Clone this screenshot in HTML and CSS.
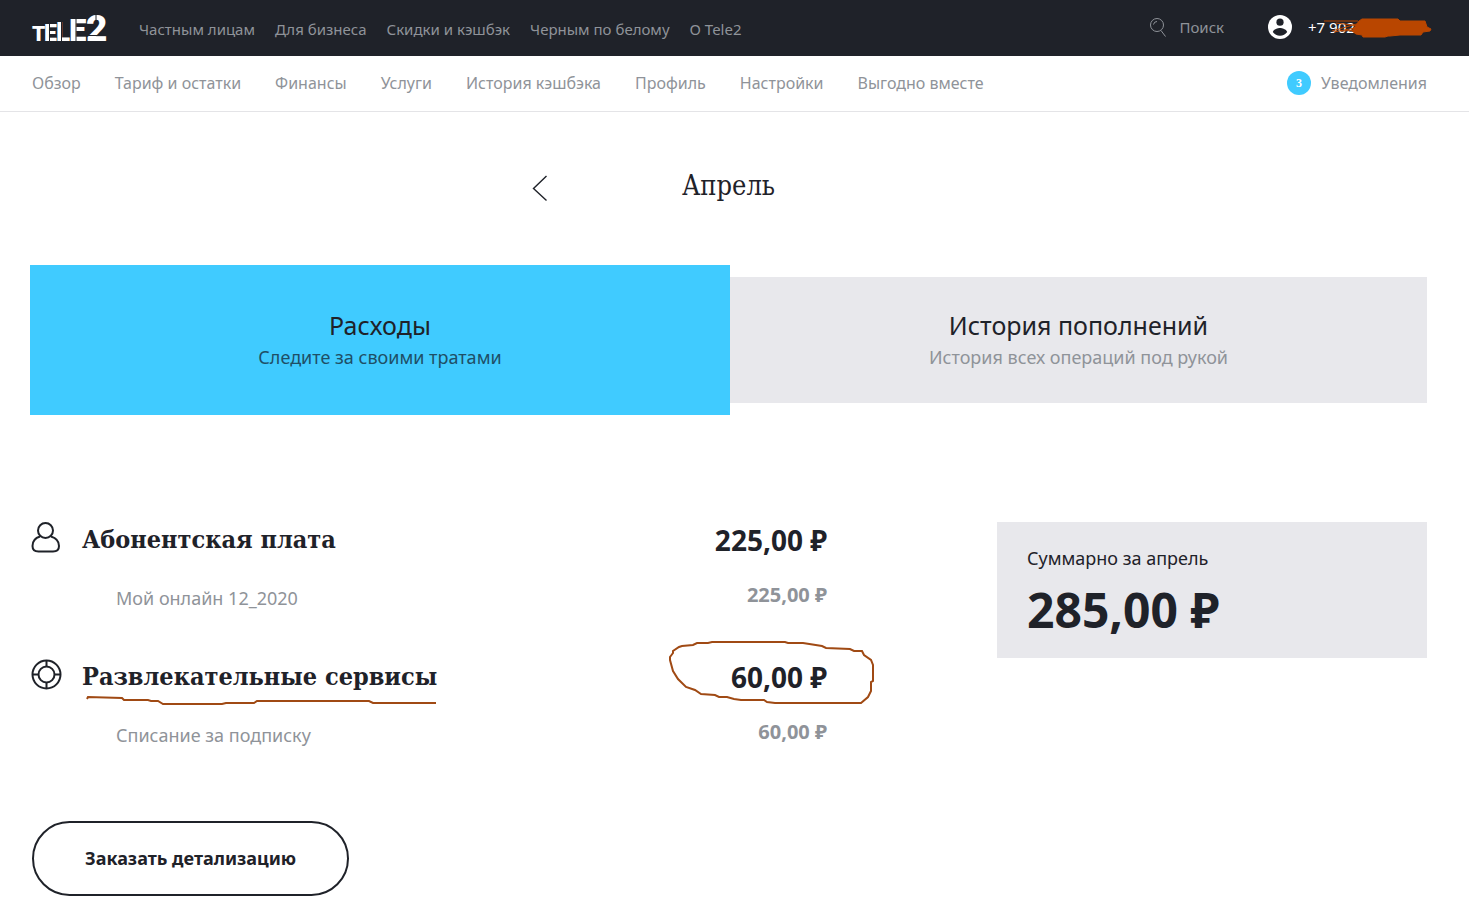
FILE: index.html
```html
<!DOCTYPE html>
<html lang="ru">
<head>
<meta charset="utf-8">
<meta name="viewport" content="width=device-width, initial-scale=1">
<title>Tele2 — Расходы</title>
<link rel="stylesheet" href="styles.css">
</head>
<body>
<header class="topbar">
  <a class="logo" href="#" aria-label="Tele2">
    <svg width="74" height="30" viewBox="0 0 74 30">
      <g class="logo-text">
        <text x="0" y="28" font-size="21">T</text>
        <text x="12" y="28" font-size="23">E</text>
        <text x="24" y="28" font-size="26">L</text>
        <text x="37" y="28" font-size="31">E</text>
        <text x="54" y="28" font-size="37">2</text>
      </g>
      <path class="logo-cut" d="M17.500 8v21M29.500 6v23M44 4v25M64 0v8M54 22.500h20"/>
    </svg>
  </a>
  <nav class="site-nav" aria-label="Сайт">
    <a href="#">Частным лицам</a>
    <a href="#">Для бизнеса</a>
    <a href="#">Скидки и кэшбэк</a>
    <a href="#">Черным по белому</a>
    <a href="#">О Tele2</a>
  </nav>
  <div class="tools">
    <button class="search" type="button">
      <svg width="18" height="20" viewBox="0 0 18 20"><circle cx="8" cy="8" r="6.500"/><path d="M12 13.500l4.500 6M4.500 7.500q.5-3 3.500-3"/></svg>
      Поиск
    </button>
    <a class="account" href="#">
      <svg width="24" height="24" viewBox="0 0 24 24"><circle cx="12" cy="12" r="12" fill="#fff"/><circle cx="12" cy="7.200" r="3.600" fill="#1f2229"/><path d="M4.800 17c1-3 5-4 7.200-4s6.200 1 7.200 4a8.700 8.700 0 0 1-14.400 0z" fill="#1f2229"/></svg>
      <span class="phone">+7 902
        <svg class="scribble" width="110" height="20" viewBox="0 0 110 20"><path class="scribble-block" d="M37 2l3-2 36 0 2 2 25 0 2 6 4 2-1 2-7 1-2 3-21 0-10 1-2 0-3 1-22 0-1-2-6-1-4-3z"/><path class="scribble-lines" d="M2 2h34M14 4l24 3M10 12l28-8M12 13l26-5M20 12l18-1"/></svg>
      </span>
    </a>
  </div>
</header>
<nav class="subnav" aria-label="Личный кабинет">
  <a href="#">Обзор</a>
  <a href="#">Тариф и остатки</a>
  <a href="#">Финансы</a>
  <a href="#">Услуги</a>
  <a href="#">История кэшбэка</a>
  <a href="#">Профиль</a>
  <a href="#">Настройки</a>
  <a href="#">Выгодно вместе</a>
  <a class="notices" href="#"><span class="badge">3</span>Уведомления</a>
</nav>
<main class="page">
  <div class="month">
    <button class="prev" type="button" aria-label="Предыдущий месяц"><svg width="16" height="26" viewBox="0 0 16 26"><path d="M14.500 1L1.500 13.500l13 12"/></svg></button>
    <h1 class="month-name">Апрель</h1>
  </div>
  <div class="tabs">
    <button class="tab tab-active" type="button"><span class="tab-title">Расходы</span><span class="tab-note">Следите за своими тратами</span></button>
    <button class="tab" type="button"><span class="tab-title">История пополнений</span><span class="tab-note">История всех операций под рукой</span></button>
  </div>
  <div class="content">
    <div class="expenses">
      <section class="group">
        <div class="row row-main">
          <svg class="icon" width="32" height="32" viewBox="0 0 32 32"><circle cx="15.500" cy="8.500" r="7.500"/><path d="M10 14.500C5 16 2.500 19.500 2.500 24c0 4 2 5.500 6 5.500h14.500c4 0 6-1.500 6-5.500 0-4.500-3-8-8-9.500"/></svg>
          <h2 class="name">Абонентская плата</h2>
          <span class="amount">225,00 ₽</span>
        </div>
        <div class="row row-sub"><span>Мой онлайн 12_2020</span><span class="amount-sub">225,00 ₽</span></div>
      </section>
      <section class="group">
        <div class="row row-main">
          <svg class="icon" width="32" height="32" viewBox="0 0 32 32"><circle cx="16.500" cy="15.500" r="14"/><circle cx="16.500" cy="15.500" r="8"/><path d="M16.500 1.500v6M16.500 23.500v6M2.500 15.500h6M24.500 15.500h6"/></svg>
          <h2 class="name">Развлекательные сервисы
            <svg class="mark underline" width="354" height="10" viewBox="0 0 354 10"><path d="M1 4l1-2 34 1 2 2 24 0 3 1 7 0 5 3h59l4-1h28l3-2h112l4 2h63"/></svg>
          </h2>
          <span class="amount">60,00 ₽
            <svg class="mark lasso" width="208" height="64" viewBox="0 0 208 64"><path d="M3 19l0-3 3-4 0-2 6-4 3-1 11-1 4-2 11 0 4-1h73l3 1h15l19 3 4 2 24 1 4 2h8l2 4 7 5 2 5v16l-2 1v9l-3 6-7 6h-86l-8-1-3-2h-23l-7-1-7-2h-8l-4-2-14-1-6-4-9-3-8-8-5-8z"/></svg>
          </span>
        </div>
        <div class="row row-sub"><span>Списание за подписку</span><span class="amount-sub">60,00 ₽</span></div>
      </section>
      <button class="order" type="button">Заказать детализацию</button>
    </div>
    <aside class="summary">
      <div class="summary-label">Суммарно за апрель</div>
      <div class="summary-value">285,00 ₽</div>
    </aside>
  </div>
</main>
</body>
</html>
```
FILE: styles.css
```css
* { box-sizing: border-box; }
body {
  margin: 0;
  background: #fff;
  color: #1f2229;
  font-family: "Noto Sans", "Open Sans", sans-serif;
}
a { color: inherit; text-decoration: none; white-space: nowrap; }
button { margin: 0; padding: 0; border: 0; background: none; color: inherit; font: inherit; cursor: pointer; }
svg { display: block; flex: none; overflow: visible; }
h1, h2 { margin: 0; }

.topbar {
  display: flex;
  align-items: center;
  height: 56px;
  padding: 0 42px 0 32px;
  background: #1f2229;
  color: #8f9399;
  font-size: 15px;
}
.logo-text { fill: #fff; font-family: Roboto, sans-serif; font-weight: 900; }
.logo-cut { stroke: #1f2229; stroke-width: 1; fill: none; }
.site-nav { display: flex; gap: 20px; margin-left: 33px; padding-top: 2px; }
.tools { display: flex; align-items: center; gap: 44px; margin-left: auto; padding-bottom: 2px; }
.search { display: flex; align-items: center; gap: 12px; }
.search svg { fill: none; stroke: #8f9399; stroke-width: 1; }
.account { display: flex; align-items: center; gap: 16px; color: #fff; }
.phone { position: relative; width: 119px; }
.scribble { position: absolute; left: 14px; top: 2px; }
.scribble-block { fill: #b94600; stroke: #b94600; stroke-width: 1; }
.scribble-lines { fill: none; stroke: #b94600; stroke-width: 1; }

.subnav {
  display: flex;
  align-items: center;
  gap: 34px;
  height: 56px;
  padding: 0 42px 2px 32px;
  border-bottom: 1px solid #e4e4e7;
  color: #8f9399;
  font-size: 16px;
}
.notices { display: flex; align-items: center; gap: 10px; margin-left: auto; }
.badge {
  width: 24px;
  height: 24px;
  border-radius: 50%;
  background: #40cbff;
  color: #fff;
  font: bold 12px/24px "Liberation Serif", serif;
  text-align: center;
}

.page { padding: 54px 42px 18px 30px; }
.month {
  display: grid;
  grid-template-columns: 1fr auto 1fr;
  align-items: center;
  width: 394px;
  margin: 0 auto;
}
.prev { justify-self: start; padding-top: 4px; }
.prev svg { fill: none; stroke: #1f2229; stroke-width: 1.4; }
.month-name { font: 400 27px/40px "DejaVu Serif Condensed", "DejaVu Serif", serif; }

.tabs { display: grid; grid-template-columns: 700fr 697fr; align-items: center; margin-top: 59px; }
.tab {
  display: flex;
  flex-direction: column;
  align-items: center;
  justify-content: center;
  min-height: 126px;
  background: #e8e8ec;
}
.tab-active { min-height: 150px; background: #40cbff; }
.tab-title { font-size: 25px; line-height: 34px; }
.tab-note { color: #8f9399; font-size: 18px; line-height: 30px; }
.tab-active .tab-note { color: #1f4f66; }

.content {
  display: grid;
  grid-template-columns: 1fr 430px;
  gap: 170px;
  align-items: start;
  margin-top: 107px;
}
.group { margin-bottom: 45px; }
.row { display: flex; align-items: center; }
.row-main { line-height: 36px; }
.icon { margin: 0 20px 4px 0; fill: none; stroke: #1f2229; stroke-width: 2; }
.name { position: relative; font: 700 25px/36px "DejaVu Serif Condensed", "DejaVu Serif", serif; }
.amount { position: relative; margin-left: auto; font-size: 28px; font-weight: 700; }
.row-sub { margin-top: 24px; padding-left: 86px; color: #8f9399; font-size: 18px; line-height: 32px; }
.amount-sub { margin-left: auto; padding-bottom: 6px; font-size: 20px; line-height: 26px; font-weight: 700; }
.mark { position: absolute; fill: none; stroke: #a04a14; stroke-width: 2; }
.underline { left: 4px; top: 36px; }
.lasso { right: -48px; top: -18px; }
.order {
  margin: 25px 0 0 2px;
  padding: 0 51px;
  border: 2px solid #1f2229;
  border-radius: 38px;
  font-size: 18px;
  font-weight: 700;
  line-height: 71px;
}

.summary { padding: 20px 30px; background: #e8e8ec; }
.summary-label { font-size: 18px; line-height: 32px; }
.summary-value { margin-top: 8px; font-size: 48px; font-weight: 700; line-height: 56px; }
```
